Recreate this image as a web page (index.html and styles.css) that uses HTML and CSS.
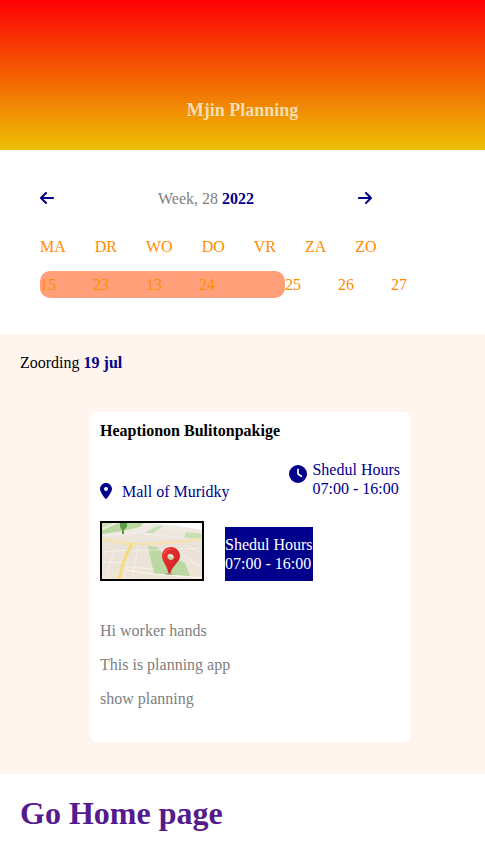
FILE: index.html
```html
<!DOCTYPE html>
<html lang="en">
<head>
<meta charset="utf-8">
<meta name="viewport" content="width=device-width, initial-scale=1">
<title>Mjin Planning</title>
<link rel="stylesheet" href="styles.css">
</head>
<body>
<header class="header">
  <h1 class="title">Mjin Planning</h1>
</header>
<main>
  <section class="calendar">
    <div class="week">
      <button class="arrow" type="button" aria-label="Previous week">
        <svg viewBox="0 0 448 512" width="14" height="16" aria-hidden="true"><path d="M9.400 233.400c-12.500 12.500-12.500 32.800 0 45.300l160 160c12.500 12.500 32.800 12.500 45.300 0s12.500-32.800 0-45.300L109.200 288 416 288c17.700 0 32-14.300 32-32s-14.300-32-32-32l-306.700 0L214.600 118.600c12.500-12.500 12.500-32.800 0-45.300s-32.800-12.500-45.300 0l-160 160z"/></svg>
      </button>
      <p>Week, 28 <strong>2022</strong></p>
      <button class="arrow" type="button" aria-label="Next week">
        <svg viewBox="0 0 448 512" width="14" height="16" aria-hidden="true"><path d="M438.600 278.600c12.500-12.500 12.500-32.800 0-45.300l-160-160c-12.500-12.500-32.800-12.500-45.300 0s-12.500 32.800 0 45.300L338.800 224 32 224c-17.700 0-32 14.300-32 32s14.300 32 32 32l306.700 0L233.400 393.400c-12.500 12.500-12.500 32.800 0 45.300s32.800 12.500 45.300 0l160-160z"/></svg>
      </button>
    </div>
    <div class="days">
      <span>MA</span><span>DR</span><span>WO</span><span>DO</span><span>VR</span><span>ZA</span><span>ZO</span>
    </div>
    <div class="dates">
      <div class="range"><span>15</span><span>23</span><span>13</span><span>24</span></div>
      <div class="rest"><span>25</span><span>26</span><span>27</span></div>
    </div>
  </section>
  <section class="agenda">
    <p>Zoording <strong>19 jul</strong></p>
    <article class="card">
      <h2 class="card-title">Heaptionon Bulitonpakige</h2>
      <div class="info">
        <p class="place">
          <svg viewBox="0 0 384 512" width="12" height="16" aria-hidden="true"><path d="M215.700 499.200C267 435 384 279.400 384 192C384 86 298 0 192 0S0 86 0 192c0 87.400 117 243 168.300 307.200c12.300 15.300 35.100 15.300 47.400 0zM192 128a64 64 0 1 1 0 128 64 64 0 1 1 0-128z"/></svg>
          <span>Mall of Muridky</span>
        </p>
        <p class="hours">
          <svg viewBox="0 0 512 512" width="18" height="18" aria-hidden="true"><path d="M256 0a256 256 0 1 1 0 512A256 256 0 1 1 256 0zM232 120l0 136c0 8 4 15.500 10.700 20l96 64c11 7.400 25.900 4.400 33.300-6.700s4.400-25.900-6.700-33.300L280 243.200 280 120c0-13.300-10.700-24-24-24s-24 10.700-24 24z"/></svg>
          <span>Shedul Hours<br>07:00 - 16:00</span>
        </p>
      </div>
      <div class="actions">
        <svg class="map" viewBox="0 0 100 56" role="img" aria-label="Map">
          <defs>
            <linearGradient id="land" x1="0" y1="0" x2="0" y2="1"><stop offset="0" stop-color="#f1ece6"/><stop offset=".4" stop-color="#e9e2d8"/><stop offset="1" stop-color="#efe5d8"/></linearGradient>
            <linearGradient id="pin" x1="0" y1="0" x2="1" y2="1"><stop offset="0" stop-color="#ee3b38"/><stop offset="1" stop-color="#cc1a1e"/></linearGradient>
          </defs>
          <rect width="100" height="56" fill="url(#land)"/>
          <path d="M40 0H100V7Q70 1 40 0Z" fill="#fff"/>
          <path d="M17 0H41L38 4L20 8L0 11V7Z" fill="#b9d9a0"/>
          <path d="M0 0H12L0 5Z" fill="#c9dfb8"/>
          <path d="M55 3H61L51 10H43ZM84 9L100 11V17L82 14Z" fill="#c6dfb3"/>
          <path d="M46 23L55 24L60 30L83 40L88 53L52 51Z" fill="#bad8a2"/>
          <g fill="none" stroke="#fbf8f3" stroke-width="1" opacity=".6">
            <path d="M0 13L43 8M43 11L82 15M0 29L28 27M30 28L100 25M0 39L24 40M24 44L52 46M13 25L3 56M36 25L30 56M66 24L100 44M84 22L100 30"/>
          </g>
          <path d="M24 47L52 51L100 55" fill="none" stroke="#fffaf1" stroke-width="1"/>
          <path d="M0 16Q18 20 31 21Q65 21 100 16" fill="none" stroke="#f5e2b4" stroke-width="3"/>
          <path d="M30 20Q22 34 17 56" fill="none" stroke="#f8da7b" stroke-width="3"/>
          <path d="M22 11H20V7L18 4V0H25V4L22 7Z" fill="#5c9e43"/>
          <ellipse cx="67" cy="51" rx="4" ry="1" fill="#8c7460" opacity=".5"/>
          <path fill-rule="evenodd" d="M69 24C63 24 60 28 60 33C60 39 65 42 66 49Q67 52 69 49C70 43 78 39 78 33C78 28 74 24 69 24ZM68 31C73 31 73 37 69 37C65 37 64 31 68 31Z" fill="url(#pin)"/>
          <path d="M62 31Q64 26 69 26" fill="none" stroke="#f5625c" stroke-width="1"/>
        </svg>
        <button class="schedule" type="button">Shedul Hours<br>07:00 - 16:00</button>
      </div>
      <div class="notes">
        <p>Hi worker hands</p>
        <p>This is planning app</p>
        <p>show planning</p>
      </div>
    </article>
  </section>
</main>
<footer class="footer"><a href="#">Go Home page</a></footer>
</body>
</html>
```

FILE: styles.css
```css
* {
  box-sizing: border-box;
}

body {
  margin: 0;
  background: #fff;
  color: #000;
  font: 16px/19px "Liberation Serif", "Times New Roman", serif;
}

h1, h2, p {
  margin: 0;
}

button {
  border: 0;
  padding: 0;
  font: inherit;
  cursor: pointer;
}

svg {
  display: block;
  fill: currentColor;
}

strong {
  color: darkblue;
}

.header {
  padding: 100px 20px 29px;
  background: linear-gradient(#fd0004, #ecc003);
  text-align: center;
}

.title {
  color: wheat;
  font-size: 18px;
  line-height: 21px;
}

.calendar {
  padding: 39px 40px 36px;
  color: darkorange;
}

.week {
  display: flex;
  justify-content: space-between;
  max-width: 332px;
  color: gray;
}

.arrow {
  background: none;
  color: darkblue;
}

.arrow svg {
  margin-bottom: 2px;
}

.days {
  display: flex;
  gap: 29px;
  margin-top: 29px;
}

.dates {
  display: flex;
  margin-top: 15px;
  line-height: 27px;
}

.range,
.rest {
  display: flex;
  gap: 37px;
}

.range {
  padding-right: 70px;
  border-radius: 10px;
  background: lightsalmon;
}

.agenda {
  padding: 19px 20px 32px;
  background: #fff4ee;
}

.card {
  max-width: 320px;
  margin: 40px 0 0 70px;
  padding: 9px 10px 34px;
  border-radius: 6px;
  background: #fff;
}

.card-title {
  font-size: 16px;
}

.info {
  display: flex;
  justify-content: space-between;
  align-items: flex-end;
  margin-top: 20px;
  color: darkblue;
}

.place {
  display: flex;
  align-items: center;
  gap: 10px;
}

.place svg {
  margin-bottom: 2px;
}

.hours {
  display: flex;
  gap: 5px;
  padding-bottom: 3px;
}

.hours svg {
  margin-top: 5px;
}

.actions {
  display: flex;
  align-items: flex-end;
  gap: 21px;
  margin-top: 20px;
}

.map {
  width: 104px;
  height: 60px;
  border: 2px solid #000;
}

.schedule {
  padding: 8px 0;
  background: darkblue;
  color: #fff;
  text-align: left;
}

.notes {
  display: grid;
  gap: 15px;
  margin-top: 40px;
  color: gray;
}

.footer {
  padding: 20px;
  font-size: 32px;
  font-weight: bold;
  line-height: 38px;
}

.footer a {
  color: #551a8b;
  text-decoration: none;
}
```
